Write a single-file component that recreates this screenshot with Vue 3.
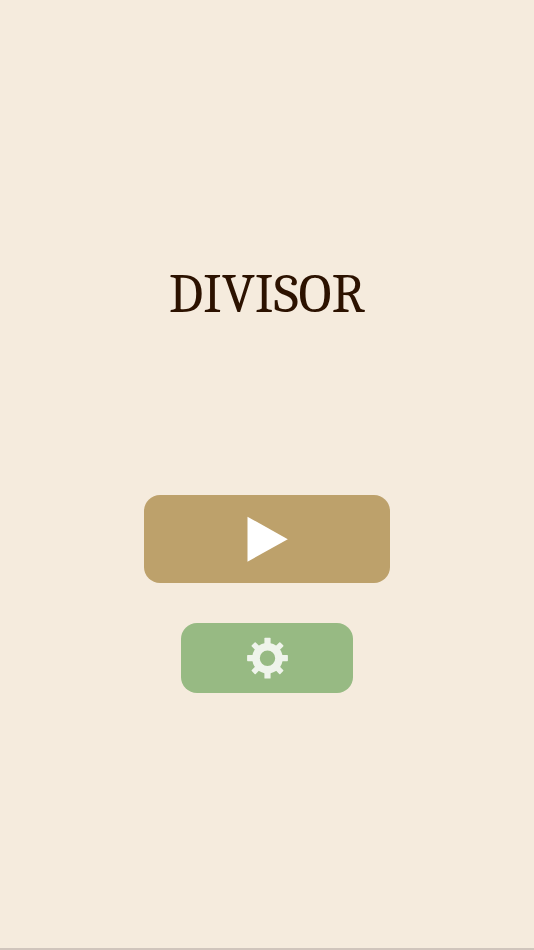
<script setup>
const straightTeeth = [0, 90, 180, 270]
const diagonalTeeth = [45, 135, 225, 315]
</script>

<template>
  <main class="screen">
    <h1 class="title">DIVISOR</h1>
    <nav class="menu">
      <button class="button play" type="button" aria-label="Play">
        <svg class="play-icon" viewBox="0 0 42 46" aria-hidden="true">
          <path d="M1.5 0.7 L41.8 23.2 L1.5 45.7 Z" fill="#ffffff" />
        </svg>
      </button>
      <button class="button settings" type="button" aria-label="Settings">
        <svg class="gear-icon" viewBox="-21 -21 42 42" aria-hidden="true">
          <g fill="#eff4eb" transform="translate(0.5 0.2)">
            <rect v-for="a in straightTeeth" :key="a" x="-3.1" y="-20.4" width="6.2" height="8" rx="0.7" :transform="`rotate(${a})`" />
            <rect v-for="a in diagonalTeeth" :key="a" x="-2.8" y="-20.2" width="5.6" height="8" rx="0.8" :transform="`rotate(${a})`" />
            <circle r="11.5" fill="none" stroke="#eff4eb" stroke-width="7.6" />
          </g>
        </svg>
      </button>
    </nav>
  </main>
</template>

<style>
body {
  background: #f5ebdd;
}
</style>

<style scoped>
.screen {
  box-sizing: border-box;
  min-height: 100vh;
  padding: 264px 24px 24px;
  display: flex;
  flex-direction: column;
  align-items: center;
  gap: 171px;
  background: #f5ebdd;
  border-bottom: 2px solid #d0c5bc;
}

.title {
  margin: 0;
  color: #2c1200;
  font-family: Caladea, Cambria, "Liberation Serif", serif;
  font-size: 55px;
  line-height: 60px;
  font-weight: 400;
}

.menu {
  width: 100%;
  display: flex;
  flex-direction: column;
  align-items: center;
  gap: 40px;
}

.button {
  display: flex;
  align-items: center;
  justify-content: center;
  padding: 0;
  border: 0;
  border-radius: 16px;
  cursor: pointer;
}

.play {
  width: 50.5%;
  max-width: 320px;
  height: 88px;
  background: #bda16b;
}

.settings {
  width: 35.4%;
  max-width: 224px;
  height: 70px;
  background: #97ba83;
}

.play-icon {
  width: 42px;
  height: 46px;
}

.gear-icon {
  width: 42px;
  height: 42px;
}
</style>
